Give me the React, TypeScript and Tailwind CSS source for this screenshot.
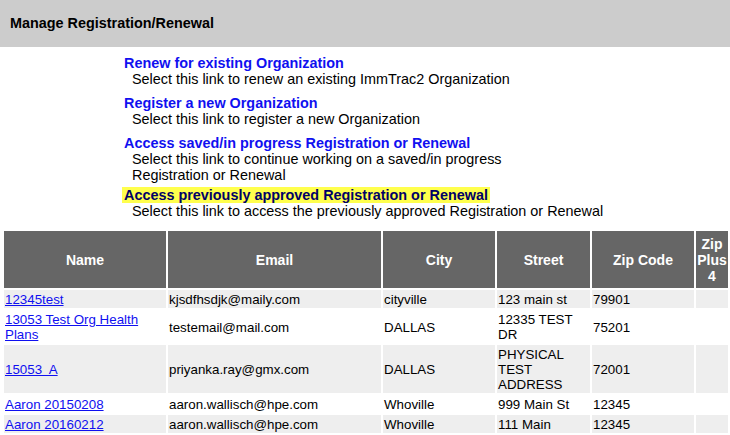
const options = [
  {
    title: 'Renew for existing Organization',
    desc: ['Select this link to renew an existing ImmTrac2 Organization'],
  },
  {
    title: 'Register a new Organization',
    desc: ['Select this link to register a new Organization'],
  },
  {
    title: 'Access saved/in progress Registration or Renewal',
    desc: ['Select this link to continue working on a saved/in progress', 'Registration or Renewal'],
  },
  {
    title: 'Access previously approved Registration or Renewal',
    desc: ['Select this link to access the previously approved Registration or Renewal'],
    active: true,
  },
]

const rows = [
  { name: '12345test', email: 'kjsdfhsdjk@maily.com', city: 'cityville', street: '123 main st', zip: '79901' },
  { name: '13053 Test Org Health Plans', email: 'testemail@mail.com', city: 'DALLAS', street: '12335 TEST DR', zip: '75201' },
  { name: '15053\u00a0 A', email: 'priyanka.ray@gmx.com', city: 'DALLAS', street: 'PHYSICAL TEST ADDRESS', zip: '72001' },
  { name: 'Aaron 20150208', email: 'aaron.wallisch@hpe.com', city: 'Whoville', street: '999 Main St', zip: '12345' },
  { name: 'Aaron 20160212', email: 'aaron.wallisch@hpe.com', city: 'Whoville', street: '111 Main', zip: '12345' },
]

function App() {
  return (
    <div className="w-[730px] h-[435px] overflow-hidden bg-white text-black font-['Liberation_Sans',Arial,sans-serif]">
      <div className="h-[47px] bg-[#cccccc] flex items-center pl-[10px] text-[14.4px] font-bold">
        Manage Registration/Renewal
      </div>

      <div className="pl-[124px] pt-[8px] flex flex-col text-[14.4px] leading-[16px]">
        {options.map((opt, i) => (
          <div key={opt.title} className={i === 0 ? '' : i === 3 ? 'mt-[4px]' : 'mt-[8px]'}>
            <a
              href="#"
              className={`font-bold ${
                opt.active ? 'bg-[#ffff4d] text-[#000066] px-[2px] -ml-[2px]' : 'text-[#1010f0]'
              }`}
            >
              {opt.title}
            </a>
            {opt.desc.map(line => (
              <div key={line} className="pl-[8px]">{line}</div>
            ))}
          </div>
        ))}
      </div>

      <table className="mt-[10px] ml-[2px] table-fixed border-separate border-spacing-[2px] w-[728px] text-[13.33px] leading-[15px]">
        <colgroup>
          <col className="w-[162px]" />
          <col className="w-[213px]" />
          <col className="w-[112px]" />
          <col className="w-[93px]" />
          <col className="w-[102px]" />
          <col className="w-[32px]" />
        </colgroup>
        <thead>
          <tr className="h-[57px]">
            {['Name', 'Email', 'City', 'Street', 'Zip Code', 'Zip Plus 4'].map(h => (
              <th key={h} className="bg-[#666666] text-white font-bold text-[14px] leading-[16px] text-center align-middle p-0">
                {h}
              </th>
            ))}
          </tr>
        </thead>
        <tbody>
          {rows.map((r, i) => (
            <tr key={r.name} className={i % 2 === 0 ? 'bg-[#eeeeee]' : 'bg-white'}>
              <td className="pl-[1px] pt-[2px] pb-[1px] align-middle">
                <a href="#" className="text-[#1010f0] underline">{r.name}</a>
              </td>
              <td className="pl-[1px] pt-[2px] pb-[1px] align-middle">{r.email}</td>
              <td className="pl-[1px] pt-[2px] pb-[1px] align-middle">{r.city}</td>
              <td className="pl-[1px] pt-[2px] pb-[1px] align-middle">{r.street}</td>
              <td className="pl-[1px] pt-[2px] pb-[1px] align-middle">{r.zip}</td>
              <td className="pl-[1px] pt-[2px] pb-[1px] align-middle"></td>
            </tr>
          ))}
        </tbody>
      </table>
    </div>
  )
}

export default App
